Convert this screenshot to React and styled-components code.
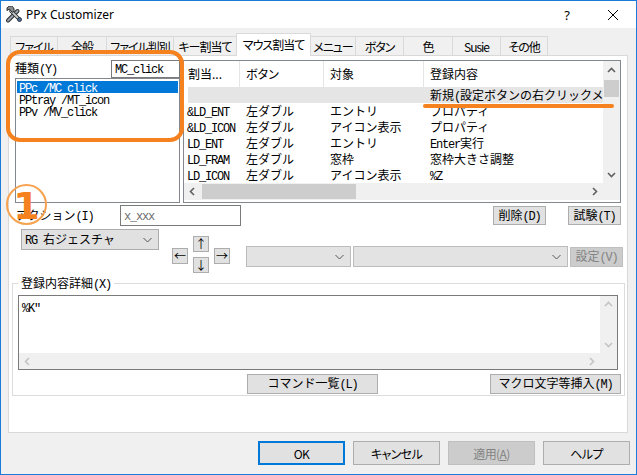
import React from 'react';
import styled, { createGlobalStyle } from 'styled-components';

const GlobalStyle = createGlobalStyle`
  html, body {
    margin: 0;
    padding: 0;
    background: #fff;
  }
  body {
    font-family: "Noto Sans CJK JP", sans-serif;
    font-size: 12px;
    color: #000;
  }
  * {
    box-sizing: border-box;
  }
`;

// MS Gothic look: half-width ascii in a mono font, kanji/kana at full width
const Half = styled.span`
  font-family: "Liberation Mono", monospace;
  font-size: 12px;
  letter-spacing: -1.2px;
`;

const Full = styled.span`
  font-family: "Noto Sans CJK JP", sans-serif;
  font-size: 12px;
`;

const Gothic = ({ children }) => (
  <span>
    {String(children)
      .split(/([\x20-\x7e]+)/)
      .filter(Boolean)
      .map((part, i) =>
        /^[\x20-\x7e]/.test(part) ? <Half key={i}>{part}</Half> : <Full key={i}>{part}</Full>
      )}
  </span>
);

const Chevron = ({ dir, color = '#606060', size = 9 }) => {
  const points = {
    up: '1,6 4.5,2.5 8,6',
    down: '1,3 4.5,6.5 8,3',
    left: '6,1 2.5,4.5 6,8',
    right: '3,1 6.5,4.5 3,8',
  }[dir];
  return (
    <svg width={size} height={size} viewBox="0 0 9 9">
      <polyline points={points} fill="none" stroke={color} strokeWidth="1.6" />
    </svg>
  );
};

const ComboArrow = ({ color = '#444' }) => (
  <svg width="9" height="6" viewBox="0 0 9 6">
    <polyline points="0.5,1 4.5,5 8.5,1" fill="none" stroke={color} strokeWidth="1" />
  </svg>
);

const AppIcon = () => (
  <svg width="18" height="18" viewBox="0 0 18 18">
    <path d="M3 14.5 L12.5 5" stroke="#2a2a2a" strokeWidth="4" strokeLinecap="round" />
    <path d="M3 14.5 L12.5 5" stroke="#9aa4b0" strokeWidth="2" strokeLinecap="round" />
    <path d="M6 5 L14.5 13.5" stroke="#2a2a2a" strokeWidth="3.6" strokeLinecap="round" />
    <path d="M6 5 L14.5 13.5" stroke="#c4c8cc" strokeWidth="1.8" strokeLinecap="round" />
    <path d="M2 4.5 A3.6 3.6 0 1 1 7.5 6.5 L5.8 4.8 L4.5 3 Z" fill="#8a8f96" stroke="#2a2a2a" strokeWidth="1" />
    <circle cx="14.5" cy="13.5" r="2" fill="#4a6fa5" stroke="#1d1d1d" strokeWidth="0.8" />
  </svg>
);

const Window = styled.div`
  position: relative;
  width: 637px;
  height: 475px;
  border: 1px solid #1b7bd8;
  background: #f0f0f0;
  display: flex;
  flex-direction: column;
  overflow: hidden;
`;

const TitleBar = styled.div`
  height: 27px;
  background: #fff;
  display: flex;
  align-items: center;
  padding-left: 4px;
`;

const TitleText = styled.span`
  font-family: "Noto Sans", sans-serif;
  font-size: 12px;
  margin-left: 3px;
  flex: 1;
`;

const TitleButton = styled.div`
  width: 46px;
  height: 27px;
  display: flex;
  align-items: center;
  justify-content: center;
  font-family: "Noto Sans", sans-serif;
  font-size: 13px;
`;

const Body = styled.div`
  flex: 1;
  display: flex;
  flex-direction: column;
  padding: 5px 6px 0 7px;
`;

const TabStrip = styled.div`
  display: flex;
  align-items: flex-end;
  height: 22px;
  margin-left: 2px;
  position: relative;
  z-index: 1;
`;

const Tab = styled.div`
  width: ${(p) => p.$w}px;
  height: ${(p) => (p.$active ? 23 : 19)}px;
  margin-bottom: ${(p) => (p.$active ? -1 : 0)}px;
  margin-left: ${(p) => (p.$first ? 0 : -1)}px;
  padding-bottom: ${(p) => (p.$active ? 2 : 0)}px;
  border: 1px solid #d9d9d9;
  border-bottom: none;
  background: ${(p) => (p.$active ? '#fff' : '#f0f0f0')};
  position: relative;
  z-index: ${(p) => (p.$active ? 2 : 0)};
  display: flex;
  align-items: center;
  justify-content: center;
  font-size: 12px;
  letter-spacing: -1px;
  font-feature-settings: "palt" 1;
  white-space: nowrap;
`;

const Panel = styled.div`
  width: 620px;
  height: 378px;
  background: #fff;
  border: 1px solid #d9d9d9;
  padding: 4px 2px 0 3px;
  display: flex;
  flex-direction: column;
  line-height: 14px;
  white-space: pre;
`;

const TopRow = styled.div`
  display: flex;
  gap: 3px;
  margin-left: 3px;
  height: 143px;
`;

const KindGroup = styled.div`
  width: 165px;
  display: flex;
  flex-direction: column;
`;

const KindHead = styled.div`
  height: 18px;
  display: flex;
  align-items: center;
  justify-content: space-between;
`;

const TextBox = styled.div`
  width: ${(p) => p.$w}px;
  height: ${(p) => p.$h}px;
  border: 1px solid #7a7a7a;
  background: #fff;
  padding-left: 3px;
  display: flex;
  align-items: center;
  color: ${(p) => (p.$hint ? '#6d6d6d' : '#000')};
`;

const ListBox = styled.div`
  flex: 1;
  border: 1px solid #828790;
  padding: 2px 1px;
  background: #fff;
`;

const ListItem = styled.div`
  height: 12px;
  line-height: 12px;
  padding-left: 2px;
  background: ${(p) => (p.$selected ? '#0078d7' : 'transparent')};
  color: ${(p) => (p.$selected ? '#fff' : '#000')};
`;

const ListView = styled.div`
  width: 438px;
  border: 1px solid #828790;
  background: #fff;
  display: grid;
  grid-template-columns: 1fr 17px;
  grid-template-rows: 122px 17px 1fr;
`;

const ListContent = styled.div`
  overflow: hidden;
`;

const COLS = '56px 84px 100px 1fr';

const HeaderRow = styled.div`
  display: grid;
  grid-template-columns: ${COLS};
  height: 26px;
`;

const HeaderCell = styled.div`
  border-right: ${(p) => (p.$last ? 'none' : '1px solid #e5e5e5')};
  padding-left: ${(p) => (p.$first ? 4 : 6)}px;
  display: flex;
  align-items: center;
  font-feature-settings: "palt" 1;
  overflow: hidden;
`;

const DataRow = styled.div`
  display: grid;
  grid-template-columns: ${COLS};
  height: 16px;
  line-height: 16px;
  background: ${(p) => (p.$selected ? 'linear-gradient(to right, transparent 4px, #e5e5e5 4px)' : 'transparent')};
`;

const DataCell = styled.div`
  padding-left: ${(p) => (p.$first ? 3 : 6)}px;
  overflow: hidden;
  white-space: pre;
`;

const VScroll = styled.div`
  background: #f0f0f0;
  display: flex;
  flex-direction: column;
`;

const HScroll = styled.div`
  background: #f0f0f0;
  display: flex;
`;

const ArrowCell = styled.div`
  width: ${(p) => p.$w || 17}px;
  height: ${(p) => p.$h || 17}px;
  display: flex;
  align-items: center;
  justify-content: center;
  flex-shrink: 0;
`;

const Thumb = styled.div`
  background: #cdcdcd;
  margin: 1px;
  width: ${(p) => (p.$w ? `${p.$w}px` : 'auto')};
  height: ${(p) => (p.$h ? `${p.$h}px` : 'auto')};
`;

const Spacer = styled.div`
  flex: 1;
`;

const Corner = styled.div`
  background: #f0f0f0;
`;

const ActionRow = styled.div`
  display: flex;
  align-items: center;
  height: 21px;
  margin-top: 2px;
  padding-right: 4px;
`;

const FieldLabel = styled.div`
  width: ${(p) => p.$w}px;
  margin-left: ${(p) => p.$ml || 0}px;
`;

const Button = styled.div`
  width: ${(p) => p.$w}px;
  height: ${(p) => p.$h || 19}px;
  margin-left: ${(p) => (p.$ml === 'auto' ? 'auto' : `${p.$ml || 0}px`)};
  margin-top: ${(p) => p.$mt || 0}px;
  background: ${(p) => (p.$disabled ? '#cccccc' : '#e1e1e1')};
  border: 1px solid ${(p) => (p.$disabled ? '#bfbfbf' : '#adadad')};
  color: ${(p) => (p.$disabled ? '#838383' : '#000')};
  display: flex;
  align-items: center;
  justify-content: center;
  flex-shrink: 0;
`;

const ControlRow = styled.div`
  display: flex;
  align-items: flex-start;
  height: 44px;
  margin-top: 3px;
`;

const Combo = styled.div`
  width: ${(p) => p.$w}px;
  height: 21px;
  margin-left: ${(p) => p.$ml || 0}px;
  background: ${(p) => (p.$disabled ? '#e3e3e3' : '#e1e1e1')};
  border: 1px solid ${(p) => (p.$disabled ? '#bcbcbc' : '#adadad')};
  display: flex;
  align-items: center;
  padding: 0 6px 0 3px;
  flex-shrink: 0;
`;

const ComboText = styled.div`
  flex: 1;
`;

const ArrowPad = styled.div`
  display: grid;
  grid-template-columns: repeat(3, 16px);
  grid-template-rows: repeat(2, 16px);
  column-gap: 5px;
  row-gap: 5px;
  margin: 7px 0 0 13px;
`;

const PadButton = styled.div`
  width: 16px;
  height: 16px;
  background: #e1e1e1;
  border: 1px solid #adadad;
  display: flex;
  align-items: center;
  justify-content: center;
  font-size: 12px;
  line-height: 1;
  grid-column: ${(p) => p.$col};
  grid-row: ${(p) => p.$row};
  align-self: ${(p) => (p.$side ? 'center' : 'start')};
  margin-top: ${(p) => (p.$side ? 3 : 0)}px;
`;

const SetRow = styled.div`
  display: flex;
  align-items: flex-start;
  gap: 2px;
  margin: 17px 0 0 16px;
`;

const Group = styled.fieldset`
  margin: 3px 0 0 0;
  padding: 5px 6px 1px 5px;
  border: 1px solid #dcdcdc;
  width: 613px;
  min-width: 0;
`;

const Legend = styled.legend`
  padding: 0 3px;
  height: 14px;
  line-height: 14px;
`;

const EditBox = styled.div`
  width: 600px;
  height: 75px;
  border: 1px solid #7a7a7a;
  background: #fff;
  display: grid;
  grid-template-columns: 1fr 17px;
  grid-template-rows: 1fr 16px;
`;

const EditText = styled.div`
  padding: 4px 3px;
`;

const GroupButtons = styled.div`
  display: flex;
  margin-top: 4px;
  margin-right: -3px;
`;

const ButtonBar = styled.div`
  display: flex;
  justify-content: flex-end;
  gap: 8px;
  margin-top: 8px;
`;

const DialogButton = styled.div`
  width: 87px;
  height: 24px;
  background: ${(p) => (p.$disabled ? '#cccccc' : '#e1e1e1')};
  border: ${(p) => (p.$default ? '2px solid #0078d7' : `1px solid ${p.$disabled ? '#bfbfbf' : '#adadad'}`)};
  color: ${(p) => (p.$disabled ? '#838383' : '#000')};
  display: flex;
  align-items: center;
  justify-content: center;
  font-size: 12px;
  letter-spacing: -0.6px;
  font-feature-settings: "palt" 1;
`;

const OrangeFrame = styled.div`
  position: absolute;
  left: 5px;
  top: 49px;
  width: 178px;
  height: 92px;
  border: 4px solid #f5821f;
  border-radius: 14px;
  z-index: 5;
  pointer-events: none;
`;

const OrangeLine = styled.div`
  position: absolute;
  left: 422px;
  top: 103px;
  width: 191px;
  height: 4px;
  border-radius: 2px;
  background: #f5821f;
  z-index: 5;
`;

const StepMark = styled.div`
  position: absolute;
  left: 5px;
  top: 183px;
  width: 41px;
  height: 41px;
  border: 2px solid #f7a24f;
  border-radius: 50%;
  display: flex;
  align-items: center;
  justify-content: center;
  padding-top: 3px;
  font-family: "DejaVu Sans", sans-serif;
  font-weight: bold;
  font-size: 38px;
  color: #f5821f;
  z-index: 5;
`;

const tabs = [
  ['ファイル', 48],
  ['全般', 50],
  ['ファイル判別', 68],
  ['キー割当て', 64],
  ['マウス割当て', 75, true],
  ['メニュー', 46],
  ['ボタン', 49],
  ['色', 50],
  ['Susie', 49],
  ['その他', 48],
];

const rows = [
  ['', '', '', '新規(設定ボタンの右クリックメニュー)', true],
  ['&LD_ENT', '左ダブル', 'エントリ', 'プロパティ'],
  ['&LD_ICON', '左ダブル', 'アイコン表示', 'プロパティ'],
  ['LD_ENT', '左ダブル', 'エントリ', 'Enter実行'],
  ['LD_FRAM', '左ダブル', '窓枠', '窓枠大きさ調整'],
  ['LD_ICON', '左ダブル', 'アイコン表示', '%Z'],
];

export default function App() {
  return (
    <>
      <GlobalStyle />
      <Window>
        <TitleBar>
          <AppIcon />
          <TitleText>PPx Customizer</TitleText>
          <TitleButton>?</TitleButton>
          <TitleButton>
            <svg width="10" height="10" viewBox="0 0 10 10">
              <path d="M0 0 L10 10 M10 0 L0 10" stroke="#000" strokeWidth="1" />
            </svg>
          </TitleButton>
        </TitleBar>

        <Body>
          <TabStrip>
            {tabs.map(([label, w, active], i) => (
              <Tab key={label} $w={w} $active={active} $first={i === 0}>
                {label}
              </Tab>
            ))}
          </TabStrip>

          <Panel>
            <TopRow>
              <KindGroup>
                <KindHead>
                  <Gothic>種類(Y)</Gothic>
                  <TextBox $w={69} $h={18}>
                    <Gothic>MC_click</Gothic>
                  </TextBox>
                </KindHead>
                <ListBox>
                  <ListItem $selected><Gothic>PPc /MC_click</Gothic></ListItem>
                  <ListItem><Gothic>PPtray /MT_icon</Gothic></ListItem>
                  <ListItem><Gothic>PPv /MV_click</Gothic></ListItem>
                </ListBox>
              </KindGroup>

              <ListView>
                <ListContent>
                  <HeaderRow>
                    <HeaderCell $first>割当...</HeaderCell>
                    <HeaderCell>ボタン</HeaderCell>
                    <HeaderCell>対象</HeaderCell>
                    <HeaderCell $last>登録内容</HeaderCell>
                  </HeaderRow>
                  {rows.map(([a, b, c, d, sel], i) => (
                    <DataRow key={i} $selected={sel}>
                      <DataCell $first><Gothic>{a}</Gothic></DataCell>
                      <DataCell><Gothic>{b}</Gothic></DataCell>
                      <DataCell><Gothic>{c}</Gothic></DataCell>
                      <DataCell><Gothic>{d}</Gothic></DataCell>
                    </DataRow>
                  ))}
                </ListContent>
                <VScroll>
                  <ArrowCell $h={18}><Chevron dir="up" /></ArrowCell>
                  <Thumb $h={17} />
                  <Spacer />
                  <ArrowCell $h={18}><Chevron dir="down" /></ArrowCell>
                </VScroll>
                <HScroll>
                  <ArrowCell><Chevron dir="left" /></ArrowCell>
                  <Thumb $w={154} />
                  <Spacer />
                  <ArrowCell><Chevron dir="right" /></ArrowCell>
                </HScroll>
                <Corner />
              </ListView>
            </TopRow>

            <ActionRow>
              <FieldLabel $w={104} $ml={4}><Gothic>アクション(I)</Gothic></FieldLabel>
              <TextBox $w={121} $h={21} $hint><Gothic>x_xxx</Gothic></TextBox>
              <Button $w={53} $ml="auto"><Gothic>削除(D)</Gothic></Button>
              <Button $w={53} $ml={22}><Gothic>試験(T)</Gothic></Button>
            </ActionRow>

            <ControlRow>
              <Combo $w={138} $ml={9}>
                <ComboText><Gothic>RG 右ジェスチャ</Gothic></ComboText>
                <ComboArrow color="#555" />
              </Combo>
              <ArrowPad>
                <PadButton $col="2" $row="1">↑</PadButton>
                <PadButton $col="1" $row="1 / 3" $side>←</PadButton>
                <PadButton $col="3" $row="1 / 3" $side>→</PadButton>
                <PadButton $col="2" $row="2">↓</PadButton>
              </ArrowPad>
              <SetRow>
                <Combo $w={105} $disabled>
                  <ComboText />
                  <ComboArrow color="#555" />
                </Combo>
                <Combo $w={215} $disabled>
                  <ComboText />
                  <ComboArrow color="#555" />
                </Combo>
                <Button $w={53} $h={20} $mt={1} $disabled>
                  <Gothic>設定(V)</Gothic>
                </Button>
              </SetRow>
            </ControlRow>

            <Group>
              <Legend><Gothic>登録内容詳細(X)</Gothic></Legend>
              <EditBox>
                <EditText><Gothic>%K"</Gothic></EditText>
                <VScroll>
                  <ArrowCell $h={17}><Chevron dir="up" color="#c4c4c4" /></ArrowCell>
                  <Spacer />
                  <ArrowCell $h={17}><Chevron dir="down" color="#c4c4c4" /></ArrowCell>
                </VScroll>
                <HScroll>
                  <ArrowCell $h={16}><Chevron dir="left" color="#c4c4c4" /></ArrowCell>
                  <Spacer />
                  <ArrowCell $h={16}><Chevron dir="right" color="#c4c4c4" /></ArrowCell>
                </HScroll>
                <Corner />
              </EditBox>
              <GroupButtons>
                <Button $w={131} $h={20} $ml={229}><Gothic>コマンド一覧(L)</Gothic></Button>
                <Button $w={131} $h={20} $ml="auto"><Gothic>マクロ文字等挿入(M)</Gothic></Button>
              </GroupButtons>
            </Group>
          </Panel>

          <ButtonBar>
            <DialogButton $default>OK</DialogButton>
            <DialogButton>キャンセル</DialogButton>
            <DialogButton $disabled>
              適用(<u>A</u>)
            </DialogButton>
            <DialogButton>ヘルプ</DialogButton>
          </ButtonBar>
        </Body>

        <OrangeFrame />
        <OrangeLine />
        <StepMark>1</StepMark>
      </Window>
    </>
  );
}
